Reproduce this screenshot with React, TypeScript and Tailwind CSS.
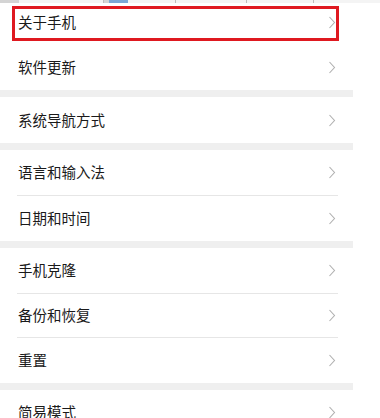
import React from "react"

type Group = { items: string[]; heights: number[] }

const groups: Group[] = [
  { items: ["关于手机", "软件更新"], heights: [42, 45] },
  { items: ["系统导航方式"], heights: [46] },
  { items: ["语言和输入法", "日期和时间"], heights: [45, 45] },
  { items: ["手机克隆", "备份和恢复", "重置"], heights: [45, 43, 45] },
  { items: ["简易模式"], heights: [45] },
]

// rows 1 & 2 have no visible divider between them
const noDivider = new Set(["关于手机"])

function Chevron() {
  return (
    <svg width="8" height="13" viewBox="0 0 8 13" fill="none" className="shrink-0">
      <polyline points="1.5,1 6.5,6.5 1.5,12" stroke="#b0b0b0" strokeWidth="1.1" />
    </svg>
  )
}

function Row({ label, height, first }: { label: string; height: number; first?: boolean }) {
  return (
    <div
      className={`flex items-center justify-between pl-[18px] pr-[17px] ${first ? "pb-[3px]" : ""}`}
      style={{ height }}
    >
      <span className="text-[14.5px] leading-none text-[#1a1a1a]">{label}</span>
      <Chevron />
    </div>
  )
}

function TopStrip() {
  return (
    <div className="flex h-[3px] bg-[#d4d4d4]">
      <div className="w-[20px]" />
      <div className="w-[90px] bg-[#f4f4f4] border-r border-[#bdbdbd]" />
      <div className="w-[5px]" />
      <div className="w-[20px] bg-[#7aa7d6]" />
      <div className="w-[50px] bg-[#f4f4f4] border-r border-[#bdbdbd]" />
      <div className="w-[75px] bg-[#f4f4f4] border-r border-[#bdbdbd]" />
      <div className="w-[70px] bg-[#f4f4f4] border-r border-[#bdbdbd]" />
      <div className="w-[70px] bg-[#f4f4f4]" />
    </div>
  )
}

export default function App() {
  return (
    <div
      className="relative w-[380px] h-[418px] overflow-hidden bg-white"
      style={{ fontFamily: '"Noto Sans CJK SC", "Noto Sans", sans-serif' }}
    >
      <TopStrip />
      <div className="w-[353px]">
        {groups.map((g, gi) => (
          <div key={gi}>
            {gi > 0 && <div className="h-[7px] bg-[#efefef]" />}
            {g.items.map((label, i) => (
              <div key={label}>
                {i > 0 && !noDivider.has(g.items[i - 1]) && (
                  <div className="ml-[17px] w-[321px] h-px bg-[#e6e6e6]" />
                )}
                <Row label={label} height={g.heights[i]} first={gi === 0 && i === 0} />
              </div>
            ))}
          </div>
        ))}
      </div>

      {/* red highlight annotation */}
      <div className="absolute left-[12px] top-[6px] w-[327px] h-[35px] border-[3px] border-[#df1920]" />
    </div>
  )
}
